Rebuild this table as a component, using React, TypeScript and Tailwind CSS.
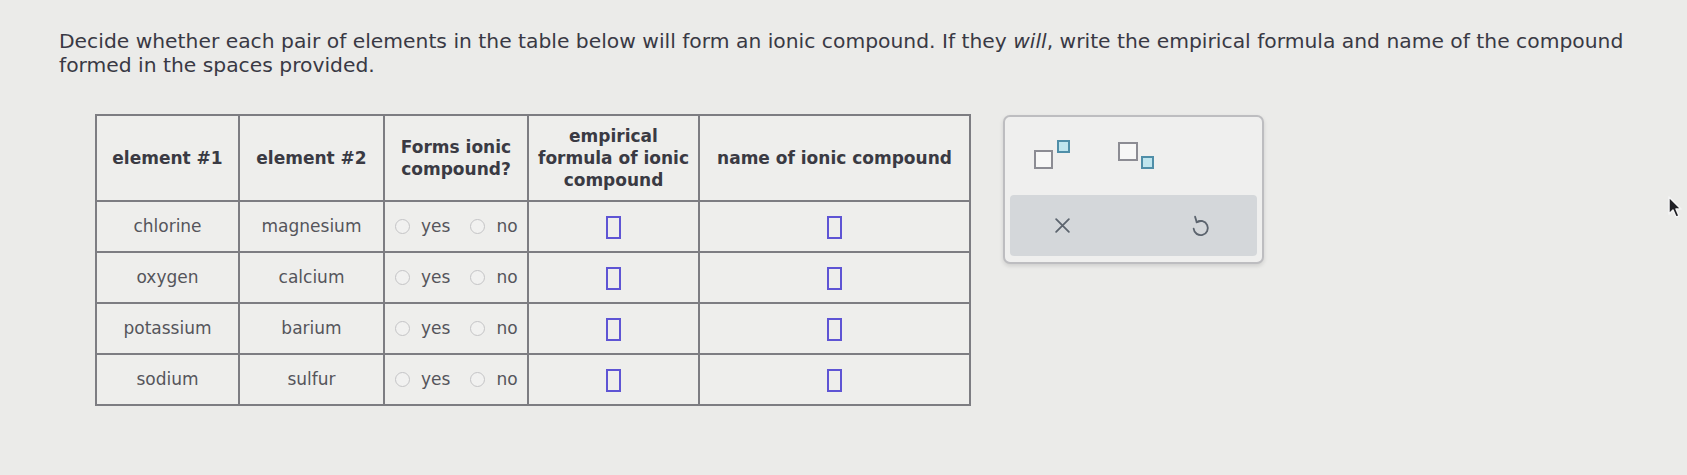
import React from "react";

const rows = [
  ["chlorine", "magnesium"],
  ["oxygen", "calcium"],
  ["potassium", "barium"],
  ["sodium", "sulfur"],
];

function Radio({ label }: { label: string }) {
  return (
    <label className="flex items-center gap-[11px]">
      <span className="w-[15px] h-[15px] rounded-full border border-[#c4c4c6] bg-[#f1f1f0]" />
      <span>{label}</span>
    </label>
  );
}

function AnswerBox() {
  return <span className="inline-block w-[15px] h-[23px] border-2 border-[#5e54d4]" />;
}

export default function App() {
  const cell = "border-2 border-[#7d7d82] text-center align-middle";
  return (
    <div
      className="w-[1687px] h-[475px] bg-[#ebebe9] overflow-hidden relative pt-[29px]"
      style={{ fontFamily: '"DejaVu Sans", Verdana, sans-serif' }}
    >
      <p className="pl-[59px] text-[20.3px] leading-[24px] text-[#393944] whitespace-nowrap">
        Decide whether each pair of elements in the table below will form an ionic compound. If they <i>will</i>, write the
        empirical formula and name of the compound
        <br />
        formed in the spaces provided.
      </p>

      <div className="flex items-start gap-[32px] pl-[95px] mt-[37px]">
        <table className="border-collapse text-[17px] text-[#55555b] bg-[#eeeeec]">
          <colgroup>
            <col className="w-[143px]" />
            <col className="w-[145px]" />
            <col className="w-[144px]" />
            <col className="w-[171px]" />
            <col className="w-[271px]" />
          </colgroup>
          <thead>
            <tr className="h-[86px] font-bold text-[17px] text-[#3a3a43] leading-[22px]">
              <th className={cell}>element #1</th>
              <th className={cell}>element #2</th>
              <th className={cell}>
                Forms ionic
                <br />
                compound?
              </th>
              <th className={cell}>
                empirical
                <br />
                formula of ionic
                <br />
                compound
              </th>
              <th className={cell}>name of ionic compound</th>
            </tr>
          </thead>
          <tbody>
            {rows.map(([a, b], i) => (
              <tr key={i} className="h-[51px]">
                <td className={cell}>{a}</td>
                <td className={cell}>{b}</td>
                <td className={cell}>
                  <div className="flex items-center pl-[10px] gap-[20px]">
                    <Radio label="yes" />
                    <Radio label="no" />
                  </div>
                </td>
                <td className={cell}>
                  <div className="flex justify-center pt-[2px]">
                    <AnswerBox />
                  </div>
                </td>
                <td className={cell}>
                  <div className="flex justify-center pt-[2px]">
                    <AnswerBox />
                  </div>
                </td>
              </tr>
            ))}
          </tbody>
        </table>

        <div className="mt-[1px] w-[261px] h-[149px] rounded-[7px] border-2 border-[#bdbdc0] bg-[#efefee] shadow-[0_2px_4px_rgba(0,0,0,0.12)] flex flex-col px-[5px] pb-[6px]">
          <div className="flex-1 flex items-start pt-[23px]">
            <div className="ml-[24px] relative w-[36px] h-[29px]">
              <span className="absolute left-0 bottom-0 w-[19px] h-[19px] border-2 border-[#8c8c93] bg-[#f7f7f6]" />
              <span className="absolute right-0 top-0 w-[13px] h-[13px] border-2 border-[#4f8ea8] bg-[#bfe5ee]" />
            </div>
            <div className="ml-[48px] relative w-[36px] h-[29px]">
              <span className="absolute left-0 top-[2px] w-[20px] h-[19px] border-2 border-[#8c8c93] bg-[#f7f7f6]" />
              <span className="absolute right-0 bottom-0 w-[13px] h-[13px] border-2 border-[#4f8ea8] bg-[#bfe5ee]" />
            </div>
          </div>
          <div className="h-[61px] rounded-[4px] bg-[#d4d7da] flex items-center">
            <div className="w-1/2 flex justify-center pr-[18px]">
              <svg width="17" height="17" viewBox="0 0 16 16" fill="none" stroke="#5c646e" strokeWidth="1.7" strokeLinecap="round">
                <path d="M2 2 L14 14 M14 2 L2 14" />
              </svg>
            </div>
            <div className="w-1/2 flex justify-center pl-[10px]">
              <svg width="22" height="24" viewBox="0 0 20 22" fill="none" stroke="#5c646e" strokeWidth="1.7" strokeLinecap="round" strokeLinejoin="round">
                <path d="M7 7.5 A6.5 6.5 0 1 1 4.2 13.5" />
                <path d="M5.5 2.5 L7 7.5 L11.5 6.3" />
              </svg>
            </div>
          </div>
        </div>
      </div>

      <svg className="absolute left-[1666px] top-[195px]" width="18" height="26" viewBox="0 0 18 26">
        <path d="M3 2 L3 19 L7 15 L10 22 L13 21 L10 14 L15 14 Z" fill="#1f1f24" stroke="#f4f4f4" strokeWidth="1.5" strokeLinejoin="round" />
      </svg>
    </div>
  );
}
